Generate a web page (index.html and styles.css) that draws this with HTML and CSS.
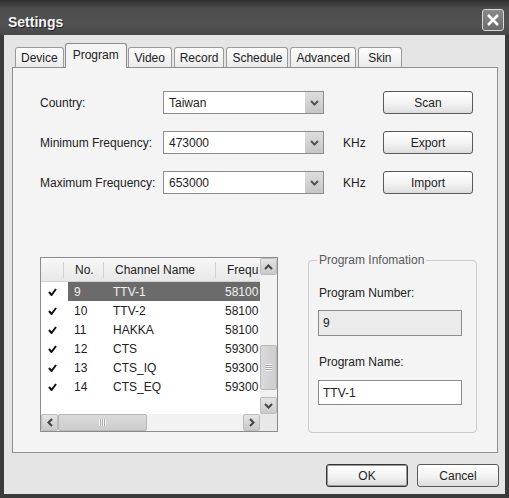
FILE: index.html
```html
<!DOCTYPE html>
<html lang="en">
<head>
    <meta charset="UTF-8">
    <title>Settings</title>
    <link rel="stylesheet" href="styles.css">
</head>
<body>
    <div class="window">
        <div class="titlebar">
            <span class="title">Settings</span>
            <button class="close-btn">
                <svg width="14" height="14" viewBox="0 0 14 14"><path d="M2 2 L12 12 M12 2 L2 12" stroke="#fff" stroke-width="2.6"/></svg>
            </button>
        </div>

        <div class="client">
            <ul class="tabs">
                <li class="tab">Device</li>
                <li class="tab active">Program</li>
                <li class="tab">Video</li>
                <li class="tab">Record</li>
                <li class="tab">Schedule</li>
                <li class="tab">Advanced</li>
                <li class="tab">Skin</li>
            </ul>

            <div class="panel">
                <!-- Frequency settings -->
                <div class="freq-form">
                    <label>Country:</label>
                    <div class="combo">
                        <span>Taiwan</span>
                        <span class="combo-arrow"><svg width="9" height="6" viewBox="0 0 9 6"><path d="M1 1 L4.5 4.5 L8 1" fill="none" stroke="#555" stroke-width="2"/></svg></span>
                    </div>
                    <span></span>
                    <button class="btn">Scan</button>

                    <label>Minimum Frequency:</label>
                    <div class="combo">
                        <span>473000</span>
                        <span class="combo-arrow"><svg width="9" height="6" viewBox="0 0 9 6"><path d="M1 1 L4.5 4.5 L8 1" fill="none" stroke="#555" stroke-width="2"/></svg></span>
                    </div>
                    <span class="unit">KHz</span>
                    <button class="btn">Export</button>

                    <label>Maximum Frequency:</label>
                    <div class="combo">
                        <span>653000</span>
                        <span class="combo-arrow"><svg width="9" height="6" viewBox="0 0 9 6"><path d="M1 1 L4.5 4.5 L8 1" fill="none" stroke="#555" stroke-width="2"/></svg></span>
                    </div>
                    <span class="unit">KHz</span>
                    <button class="btn">Import</button>
                </div>

                <div class="lower">
                    <!-- Channel list -->
                    <div class="listview">
                        <div class="list-body">
                            <div class="list-head">
                                <span></span>
                                <span class="col">No.</span>
                                <span class="col">Channel Name</span>
                                <span class="col">Frequ</span>
                            </div>
                            <div class="list-row selected">
                                <span class="check"><svg width="9" height="8" viewBox="0 0 9 8"><path d="M1 4 L3.5 7 L8 1" fill="none" stroke="#111" stroke-width="2"/></svg></span>
                                <span class="no">9</span><span>TTV-1</span><span>58100</span>
                            </div>
                            <div class="list-row">
                                <span class="check"><svg width="9" height="8" viewBox="0 0 9 8"><path d="M1 4 L3.5 7 L8 1" fill="none" stroke="#111" stroke-width="2"/></svg></span>
                                <span class="no">10</span><span>TTV-2</span><span>58100</span>
                            </div>
                            <div class="list-row">
                                <span class="check"><svg width="9" height="8" viewBox="0 0 9 8"><path d="M1 4 L3.5 7 L8 1" fill="none" stroke="#111" stroke-width="2"/></svg></span>
                                <span class="no">11</span><span>HAKKA</span><span>58100</span>
                            </div>
                            <div class="list-row">
                                <span class="check"><svg width="9" height="8" viewBox="0 0 9 8"><path d="M1 4 L3.5 7 L8 1" fill="none" stroke="#111" stroke-width="2"/></svg></span>
                                <span class="no">12</span><span>CTS</span><span>59300</span>
                            </div>
                            <div class="list-row">
                                <span class="check"><svg width="9" height="8" viewBox="0 0 9 8"><path d="M1 4 L3.5 7 L8 1" fill="none" stroke="#111" stroke-width="2"/></svg></span>
                                <span class="no">13</span><span>CTS_IQ</span><span>59300</span>
                            </div>
                            <div class="list-row">
                                <span class="check"><svg width="9" height="8" viewBox="0 0 9 8"><path d="M1 4 L3.5 7 L8 1" fill="none" stroke="#111" stroke-width="2"/></svg></span>
                                <span class="no">14</span><span>CTS_EQ</span><span>59300</span>
                            </div>
                        </div>

                        <div class="vscroll">
                            <span class="sb-btn"><svg width="9" height="6" viewBox="0 0 9 6"><path d="M1 5 L4.5 1.5 L8 5" fill="none" stroke="#444" stroke-width="2"/></svg></span>
                            <span class="vthumb"><i class="grip-h"></i></span>
                            <span class="sb-btn sb-end"><svg width="9" height="6" viewBox="0 0 9 6"><path d="M1 1 L4.5 4.5 L8 1" fill="none" stroke="#444" stroke-width="2"/></svg></span>
                        </div>

                        <div class="hscroll">
                            <span class="sb-btn"><svg width="6" height="9" viewBox="0 0 6 9"><path d="M5 1 L1.5 4.5 L5 8" fill="none" stroke="#444" stroke-width="2"/></svg></span>
                            <span class="hthumb"><i class="grip-v"></i></span>
                            <span class="sb-btn sb-end"><svg width="6" height="9" viewBox="0 0 6 9"><path d="M1 1 L4.5 4.5 L1 8" fill="none" stroke="#444" stroke-width="2"/></svg></span>
                        </div>
                        <div class="corner"></div>
                    </div>

                    <!-- Selected program -->
                    <fieldset class="info">
                        <legend>Program Infomation</legend>
                        <label>Program Number:</label>
                        <div class="field readonly">9</div>
                        <label>Program Name:</label>
                        <div class="field">TTV-1</div>
                    </fieldset>
                </div>
            </div>

            <div class="actions">
                <button class="btn default">OK</button>
                <button class="btn">Cancel</button>
            </div>
        </div>
    </div>
</body>
</html>
```

FILE: styles.css
```css
/* General */
* {
    margin: 0;
    padding: 0;
    box-sizing: border-box;
}

body {
    font-family: "Liberation Sans", Arial, sans-serif;
    font-size: 12px;
    color: #222;
    background: #fff;
}

/* Window frame */
.window {
    width: 509px;
    height: 498px;
    background: #3b3b3b;
    display: flex;
    flex-direction: column;
}

.titlebar {
    height: 35px;
    display: flex;
    justify-content: space-between;
    align-items: center;
    padding: 8px 5px 0 8px;
    background: linear-gradient(#2e2e2e, #4e4e4e 25%, #525252 70%, #484848);
}

.title {
    color: #f4f4f4;
    font-weight: bold;
    font-size: 14px;
    text-shadow: 1px 1px 0 #222;
}

.close-btn {
    width: 22px;
    height: 22px;
    margin-top: -3px;
    border: 1px solid #d8d8d8;
    border-radius: 3px;
    background: linear-gradient(#8a8a8a, #6a6a6a);
    display: flex;
    align-items: center;
    justify-content: center;
}

.client {
    flex: 1;
    margin: 0 4px 4px;
    background: #e5e5e5;
    padding: 8px 6px 0 8px;
    display: flex;
    flex-direction: column;
}

/* Tabs */
.tabs {
    list-style: none;
    display: flex;
    align-items: flex-end;
    gap: 2px;
    height: 24px;
    padding-left: 3px;
    position: relative;
    z-index: 1;
}

.tab {
    height: 20px;
    min-width: 44px;
    padding: 0 5px;
    border: 1px solid #9a9a9a;
    border-bottom: none;
    border-radius: 3px 3px 0 0;
    background: linear-gradient(#fdfdfd, #ebebeb);
    display: flex;
    align-items: center;
    justify-content: center;
}

.tab.active {
    height: 25px;
    margin: 0 -1px -1px;
    padding: 0 7px 3px;
    background: #f4f4f4;
    border-color: #8a8a8a;
}

.panel {
    height: 386px;
    margin-right: 1px;
    border: 1px solid #8f8f8f;
    background: #f4f4f4;
    padding: 23px 0 0 27px;
}

/* Frequency form */
.freq-form {
    display: grid;
    grid-template-columns: 123px 161px 59px 90px;
    grid-auto-rows: 23px;
    row-gap: 17px;
    align-items: center;
}

.combo {
    height: 23px;
    border: 1px solid #8c8c8c;
    background: #fff;
    display: flex;
    align-items: center;
    padding-left: 5px;
}

.combo-arrow {
    margin-left: auto;
    width: 18px;
    height: 21px;
    background: linear-gradient(#dedede, #c6c6c6);
    display: flex;
    align-items: center;
    justify-content: center;
}

.unit {
    padding-left: 19px;
}

.btn {
    height: 23px;
    border: 1px solid #5a5a5a;
    border-radius: 3px;
    background: linear-gradient(#ffffff, #f1f1f1 60%, #dcdcdc);
    font: inherit;
    color: #222;
}

.btn.default {
    border-color: #333;
    box-shadow: inset 0 0 0 1px #9a9a9a;
}

/* Lower section */
.lower {
    display: flex;
    align-items: flex-start;
    gap: 30px;
    margin-top: 63px;
}

.listview {
    width: 238px;
    height: 175px;
    border: 1px solid #8c8c8c;
    background: #fff;
    display: grid;
    grid-template-columns: 219px 17px;
    grid-template-rows: 156px 17px;
}

.list-body {
    overflow: hidden;
}

.list-head,
.list-row {
    display: grid;
    grid-template-columns: 22px 40px 112px 45px;
}

.list-head {
    height: 24px;
    align-items: center;
    background: linear-gradient(#f8f8f8, #e8e8e8);
    border-bottom: 1px solid #d2d2d2;
}

.list-head .col {
    border-left: 1px solid #d0d0d0;
    padding-left: 11px;
    line-height: 16px;
}

.list-row {
    height: 19px;
}

.list-row span {
    display: flex;
    align-items: center;
    padding-left: 10px;
}

.list-row .check {
    padding-left: 7px;
}

.list-row .no {
    padding-left: 11px;
}

.list-row.selected span:not(.check) {
    background: #6b6b6b;
    color: #f2f2f2;
}

.list-row.selected .no {
    margin-left: 5px;
    padding-left: 6px;
}

/* Scrollbars */
.vscroll,
.hscroll {
    background: #f2f2f2;
    display: flex;
}

.vscroll {
    flex-direction: column;
}

.sb-btn {
    width: 17px;
    height: 17px;
    flex: none;
    border: 1px solid #bdbdbd;
    border-radius: 2px;
    background: linear-gradient(#e4e4e4, #c9c9c9);
    display: flex;
    align-items: center;
    justify-content: center;
}

.sb-end {
    margin: auto 0 0 0;
}

.hscroll .sb-end {
    margin: 0 0 0 auto;
}

.vthumb,
.hthumb {
    border: 1px solid #b8b8b8;
    border-radius: 2px;
    background: linear-gradient(90deg, #dadada, #cdcdcd);
    display: flex;
    align-items: center;
    justify-content: center;
}

.vthumb {
    margin-top: 70px;
    height: 45px;
}

.hthumb {
    width: 89px;
    background: linear-gradient(#dadada, #cdcdcd);
}

.grip-h {
    width: 7px;
    height: 7px;
    background: repeating-linear-gradient(#f6f6f6 0 1px, #a9a9a9 1px 2px);
}

.grip-v {
    width: 7px;
    height: 7px;
    background: repeating-linear-gradient(90deg, #f6f6f6 0 1px, #a9a9a9 1px 2px);
}

.corner {
    background: #e8e8e8;
}

/* Program information group */
.info {
    width: 169px;
    height: 180px;
    margin-top: -4px;
    border: 1px solid #cbcbcb;
    border-radius: 4px;
    padding: 19px 13px 0 10px;
}

.info legend {
    padding: 0 2px;
    margin-left: -2px;
    color: #5a5a5a;
    line-height: 14px;
}

.info label {
    display: block;
    line-height: 14px;
}

.field {
    width: 144px;
    height: 26px;
    margin: 10px 0 19px -1px;
    border: 1px solid #8c8c8c;
    background: #fff;
    padding-left: 4px;
    display: flex;
    align-items: center;
}

.field.readonly {
    background: #ebebeb;
}

.field:last-child {
    height: 25px;
    margin-top: 11px;
}

/* Dialog buttons */
.actions {
    display: flex;
    justify-content: flex-end;
    gap: 9px;
    margin-top: 11px;
}

.actions .btn {
    width: 82px;
}
```
